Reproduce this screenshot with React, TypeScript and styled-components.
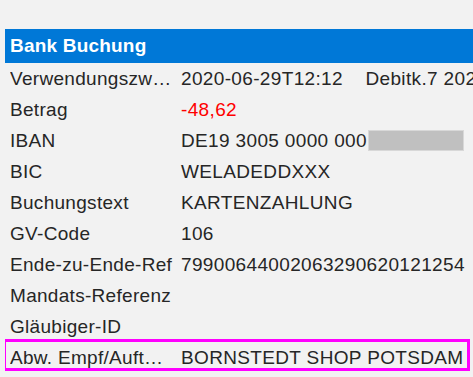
import React from 'react'
import styled, { createGlobalStyle } from 'styled-components'

const GlobalStyle = createGlobalStyle`
  html, body {
    margin: 0;
    padding: 0;
    background: #f2f2f2;
    overflow: hidden;
  }
  body {
    font-family: "Liberation Sans", Arial, sans-serif;
  }
`

interface Field {
  label: string
  value?: string
  negative?: boolean
  masked?: boolean
  highlight?: boolean
}

const fields: Field[] = [
  { label: 'Verwendungszw…', value: '2020-06-29T12:12    Debitk.7 2020-06-29 09:41' },
  { label: 'Betrag', value: '-48,62', negative: true },
  { label: 'IBAN', value: 'DE19 3005 0000 000', masked: true },
  { label: 'BIC', value: 'WELADEDDXXX' },
  { label: 'Buchungstext', value: 'KARTENZAHLUNG' },
  { label: 'GV-Code', value: '106' },
  { label: 'Ende-zu-Ende-Ref', value: '79900644002063290620121254' },
  { label: 'Mandats-Referenz' },
  { label: 'Gläubiger-ID' },
  { label: 'Abw. Empf/Auft…', value: 'BORNSTEDT SHOP POTSDAM', highlight: true },
]

const BankBuchung = () => {
  return (
    <Panel>
      <Header>Bank Buchung</Header>
      {fields.map((f) => (
        <Row key={f.label} $highlight={f.highlight}>
          <Label>{f.label}</Label>
          <Value $negative={f.negative}>
            {f.value}
            {f.masked && <Mask />}
          </Value>
        </Row>
      ))}
    </Panel>
  )
}

const Panel = styled.section`
  margin: 29px 0 0 5px;
  width: 468px;
  display: flex;
  flex-direction: column;
  color: #262626;
  font-size: 19px;
  letter-spacing: 0.3px;
  overflow: hidden;
`

const Header = styled.div`
  height: 34px;
  background: #0078d7;
  color: #fff;
  font-weight: bold;
  display: flex;
  align-items: center;
  padding-left: 5px;
  letter-spacing: 0.2px;
`

const Row = styled.div<{ $highlight?: boolean }>`
  position: relative;
  height: 31px;
  display: flex;
  align-items: center;
  padding-left: 5px;
  white-space: nowrap;

  ${({ $highlight }) =>
    $highlight &&
    `
    &::after {
      content: '';
      position: absolute;
      left: -2px;
      right: 3px;
      top: -3px;
      bottom: 2px;
      border: 3px solid #ff00ff;
      pointer-events: none;
    }
  `}
`

const Label = styled.span`
  flex: 0 0 166px;
  overflow: hidden;
  text-overflow: ellipsis;
  white-space: nowrap;
  padding-right: 5px;
`

const Value = styled.span<{ $negative?: boolean }>`
  flex: 1 0 auto;
  white-space: pre;
  display: flex;
  align-items: center;
  color: ${({ $negative }) => ($negative ? '#ff0000' : '#262626')};
  letter-spacing: 0.35px;
`

const Mask = styled.span`
  display: inline-block;
  width: 94px;
  height: 19px;
  background: #c0c0c0;
  border: 1px solid #d8d8d8;
  margin-left: 1px;
`

export default function App() {
  return (
    <>
      <GlobalStyle />
      <BankBuchung />
    </>
  )
}
